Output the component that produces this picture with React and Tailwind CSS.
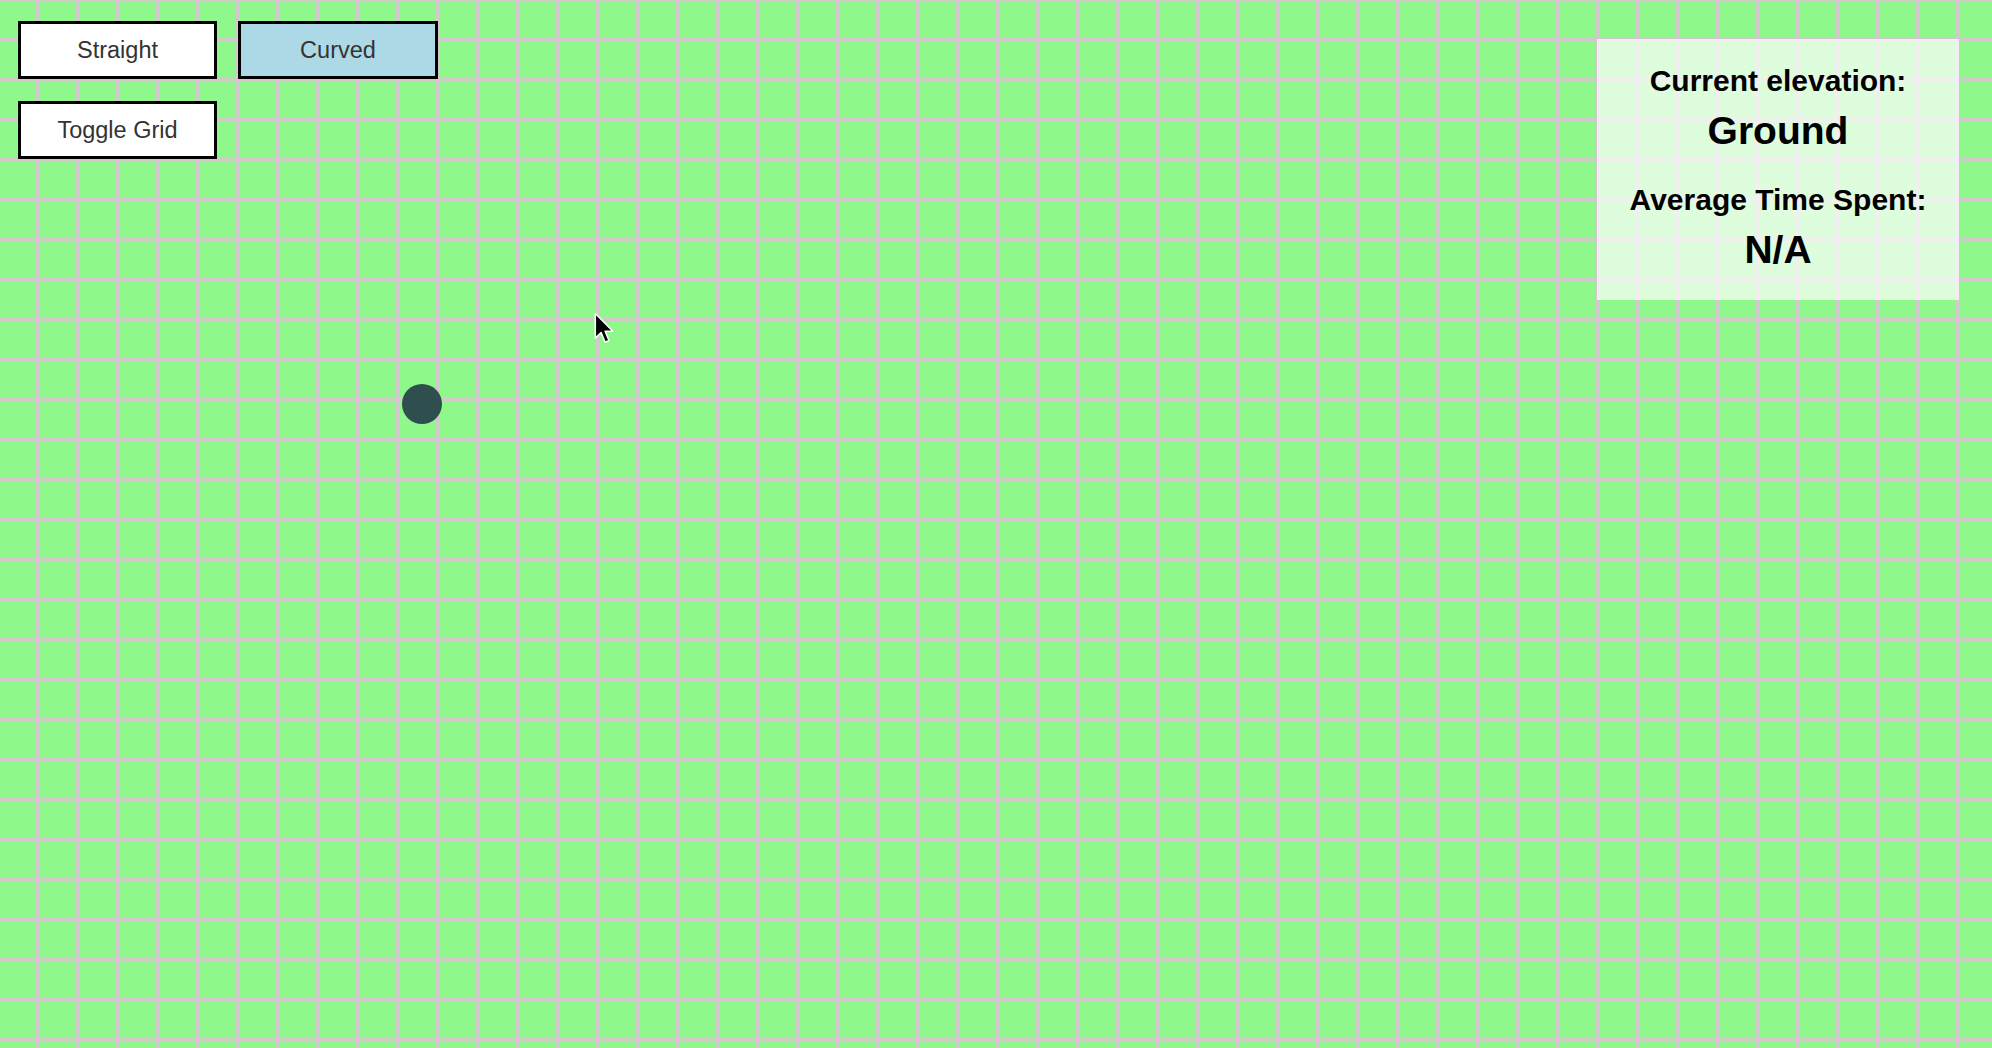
import React from "react";

export default function App() {
  return (
    <div className="relative h-[1048px] w-full overflow-hidden bg-[#8ef98a] bg-[linear-gradient(to_right,#d4c8ce_4px,transparent_4px),linear-gradient(to_bottom,#d4c8ce_4px,transparent_4px)] bg-[size:40px_40px] bg-[position:36px_38px] font-['Liberation_Sans',Arial,sans-serif]">
      <div className="flex items-start justify-between pl-[18px] pr-[33px] pt-[21px]">
        {/* Controls */}
        <div className="flex flex-col gap-[22px]">
          <div className="flex gap-[21px]">
            <button className="h-[58px] w-[199px] border-[3px] border-black bg-white pt-[2px] text-[23.5px] text-[#333]">
              Straight
            </button>
            <button className="h-[58px] w-[200px] border-[3px] border-black bg-[#add8e6] pt-[2px] text-[23.5px] text-[#333]">
              Curved
            </button>
          </div>
          <button className="h-[58px] w-[199px] border-[3px] border-black bg-white pt-[2px] text-[23.5px] text-[#333]">
            Toggle Grid
          </button>
        </div>

        {/* Info panel */}
        <div className="mt-[18px] flex w-[362px] flex-col items-center bg-white/70 pb-[31px] pt-[27px] font-bold text-black">
          <div className="text-[30px] leading-none">Current elevation:</div>
          <div className="mt-[15px] text-[39px] leading-none">Ground</div>
          <div className="mt-[35px] text-[30px] leading-none">Average Time Spent:</div>
          <div className="mt-[15px] text-[39px] leading-none">N/A</div>
        </div>
      </div>

      {/* Player dot */}
      <div className="absolute left-[402px] top-[384px] h-10 w-10 rounded-full bg-[#2f4f4f]" />

      {/* Mouse cursor */}
      <svg
        className="absolute left-[594px] top-[312px]"
        width="22"
        height="34"
        viewBox="0 0 17 26"
      >
        <path
          d="M1 1 L1 20 L5.5 15.8 L8.6 23.2 L11.6 21.9 L8.6 14.7 L14.6 14.7 Z"
          fill="#000"
          stroke="#fff"
          strokeWidth="1.2"
          strokeLinejoin="round"
        />
      </svg>
    </div>
  );
}
